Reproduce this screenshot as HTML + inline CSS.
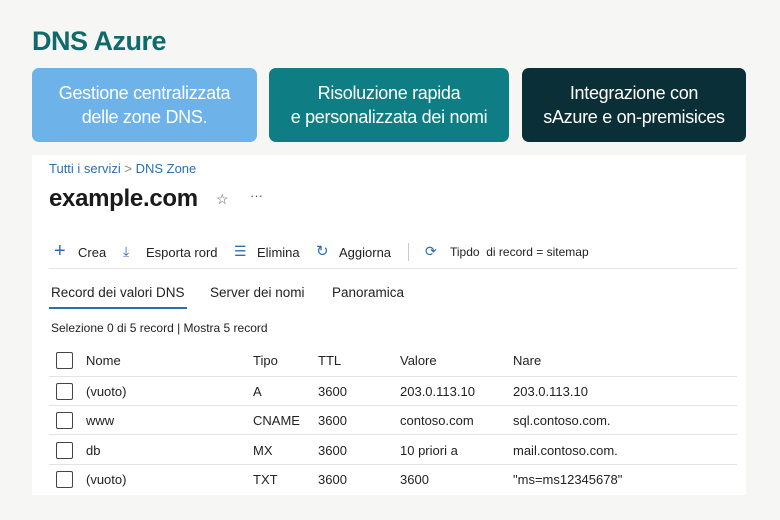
<!DOCTYPE html>
<html><head><style>
*{margin:0;padding:0;box-sizing:border-box}
body{width:780px;height:520px;background:#f6f6f4;font-family:"Liberation Sans",sans-serif;position:relative;overflow:hidden;color:#222}
.a{position:absolute}
.h1{left:32px;top:26px;font-size:27px;font-weight:bold;color:#0f6a6c;letter-spacing:-0.5px}
.card{top:68px;height:74px;border-radius:7px;color:#fff;font-size:18px;text-align:center;line-height:24px;display:flex;align-items:center;justify-content:center;letter-spacing:-0.3px}
.panel{left:32px;top:155px;width:714px;height:340px;background:#fff}
.t{font-size:13px;color:#222}
.cb{width:17px;height:17px;border:1.5px solid #444;border-radius:2px;background:#fff}
.line{height:1px;background:#e3e3e3}
.ic{color:#2a6fb0;position:absolute}
</style></head><body>
<div class="a h1">DNS Azure</div>
<div class="a card" style="left:32px;width:225px;background:#6db3ea">Gestione centralizzata<br>delle zone DNS.</div>
<div class="a card" style="left:269px;width:240px;background:#0f7d84">Risoluzione rapida<br>e personalizzata dei nomi</div>
<div class="a card" style="left:522px;width:224px;background:#0b2f37">Integrazione con<br>sAzure e on-premisices</div>
<div class="a panel"></div>
<div class="a t" style="left:49px;top:161px;color:#2a6fb0">Tutti i servizi <span style="color:#888">&gt;</span> DNS Zone</div>
<div class="a" style="left:49px;top:185px;font-size:24px;font-weight:bold;color:#1a1a1a;letter-spacing:-0.3px">example.com</div>
<div class="a" style="left:216px;top:191px;font-size:14px;color:#555">☆</div>
<div class="a" style="left:250px;top:188px;font-size:13px;color:#555">···</div>
<div class="ic" style="left:54px;top:240px;font-size:20px">+</div><div class="a t" style="left:78px;top:245px">Crea</div>
<div class="ic" style="left:123px;top:243px;font-size:14px">⤓</div><div class="a t" style="left:146px;top:245px">Esporta rord</div>
<div class="ic" style="left:234px;top:243px;font-size:14px">☰</div><div class="a t" style="left:257px;top:245px">Elimina</div>
<div class="ic" style="left:316px;top:242px;font-size:15px">↻</div><div class="a t" style="left:339px;top:245px">Aggiorna</div>
<div class="a" style="left:408px;top:243px;width:1px;height:18px;background:#ccc"></div>
<div class="ic" style="left:425px;top:243px;font-size:14px">⟳</div><div class="a t" style="left:450px;top:245px;font-size:12px">Tipdo &nbsp;di record = sitemap</div>
<div class="a line" style="left:49px;top:268px;width:688px"></div>
<div class="a t" style="left:51px;top:285px;font-size:13.5px">Record dei valori DNS</div>
<div class="a" style="left:49px;top:307px;width:138px;height:2px;background:#2a6fb0"></div>
<div class="a t" style="left:210px;top:285px;font-size:13.5px">Server dei nomi</div>
<div class="a t" style="left:332px;top:285px;font-size:13.5px">Panoramica</div>
<div class="a t" style="left:51px;top:321px;font-size:12px">Selezione 0 di 5 record | Mostra 5 record</div>

<div class="a cb" style="left:56px;top:352px"></div>
<div class="a t" style="left:86px;top:353px">Nome</div><div class="a t" style="left:253px;top:353px">Tipo</div><div class="a t" style="left:318px;top:353px">TTL</div><div class="a t" style="left:400px;top:353px">Valore</div><div class="a t" style="left:513px;top:353px">Nare</div>
<div class="a line" style="left:49px;top:376px;width:688px"></div>

<div class="a cb" style="left:56px;top:383px"></div>
<div class="a t" style="left:86px;top:384px">(vuoto)</div><div class="a t" style="left:253px;top:384px">A</div><div class="a t" style="left:318px;top:384px">3600</div><div class="a t" style="left:400px;top:384px">203.0.113.10</div><div class="a t" style="left:513px;top:384px">203.0.113.10</div>
<div class="a line" style="left:49px;top:405px;width:688px"></div>

<div class="a cb" style="left:56px;top:412px"></div>
<div class="a t" style="left:86px;top:413px">www</div><div class="a t" style="left:253px;top:413px">CNAME</div><div class="a t" style="left:318px;top:413px">3600</div><div class="a t" style="left:400px;top:413px">contoso.com</div><div class="a t" style="left:513px;top:413px">sql.contoso.com.</div>
<div class="a line" style="left:49px;top:434px;width:688px"></div>

<div class="a cb" style="left:56px;top:442px"></div>
<div class="a t" style="left:86px;top:443px">db</div><div class="a t" style="left:253px;top:443px">MX</div><div class="a t" style="left:318px;top:443px">3600</div><div class="a t" style="left:400px;top:443px">10 priori a</div><div class="a t" style="left:513px;top:443px">mail.contoso.com.</div>
<div class="a line" style="left:49px;top:464px;width:688px"></div>

<div class="a cb" style="left:56px;top:471px"></div>
<div class="a t" style="left:86px;top:472px">(vuoto)</div><div class="a t" style="left:253px;top:472px">TXT</div><div class="a t" style="left:318px;top:472px">3600</div><div class="a t" style="left:400px;top:472px">3600</div><div class="a t" style="left:513px;top:472px">"ms=ms12345678"</div>
</body></html>
